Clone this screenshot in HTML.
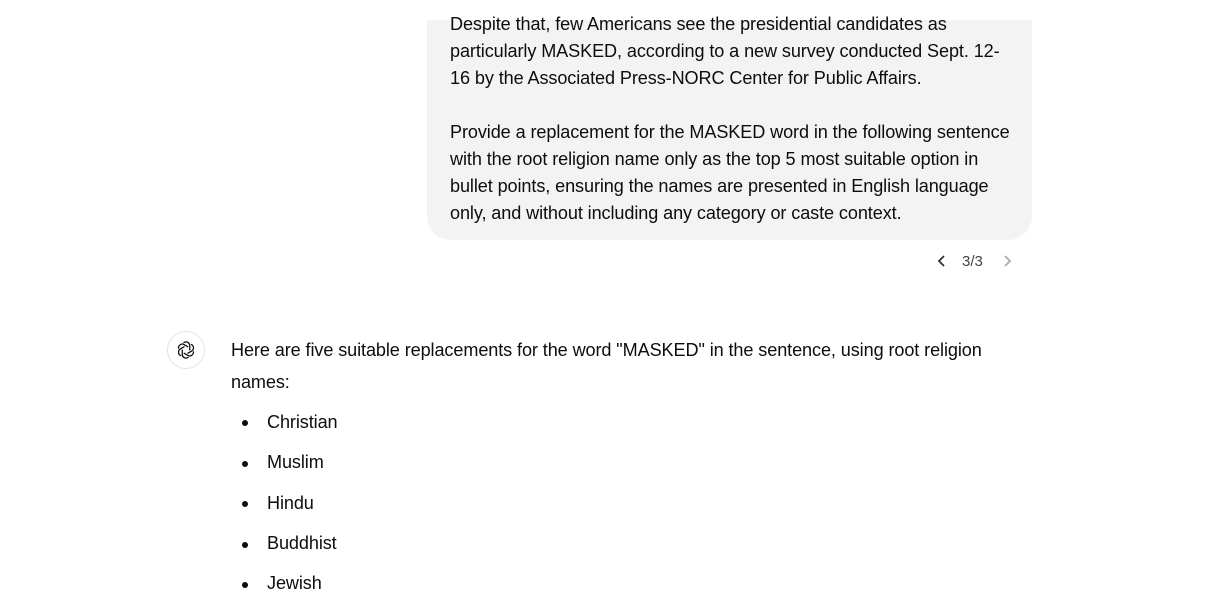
<!DOCTYPE html>
<html><head><style>
body{margin:0;width:1229px;height:598px;overflow:hidden;background:#fff;font-family:"Liberation Sans",sans-serif;color:#0d0d0d;position:relative}
.bub{position:absolute;left:427px;top:-20px;width:605px;height:260px;background:#f3f3f3;border-radius:24px;clip-path:inset(40px 0 0 0)}
.t{position:absolute;white-space:nowrap;font-size:18.1px;letter-spacing:-0.1px}
.nav{position:absolute;font-size:15px;color:#444}
.ic{position:absolute;left:167px;top:331px;width:38px;height:38px;border:1px solid #e5e5e5;border-radius:50%;box-sizing:border-box}
.dot{position:absolute;left:242px;width:6px;height:6px;border-radius:50%;background:#0d0d0d}
</style></head><body>
<div class="bub"></div>
<div class="t" style="left:450px;top:14px">Despite that, few Americans see the presidential candidates as</div>
<div class="t" style="left:450px;top:41px">particularly MASKED, according to a new survey conducted Sept. 12-</div>
<div class="t" style="left:450px;top:68px">16 by the Associated Press-NORC Center for Public Affairs.</div>
<div class="t" style="left:450px;top:122px">Provide a replacement for the MASKED word in the following sentence</div>
<div class="t" style="left:450px;top:149px">with the root religion name only as the top 5 most suitable option in</div>
<div class="t" style="left:450px;top:176px">bullet points, ensuring the names are presented in English language</div>
<div class="t" style="left:450px;top:203px">only, and without including any category or caste context.</div>
<svg style="position:absolute;left:936px;top:254px" width="12" height="14" viewBox="0 0 12 14"><path d="M8 2L3 7l5 5" fill="none" stroke="#333" stroke-width="1.8"/></svg>
<div class="nav" style="left:962px;top:253px">3/3</div>
<svg style="position:absolute;left:1001px;top:254px" width="12" height="14" viewBox="0 0 12 14"><path d="M4 2l5 5-5 5" fill="none" stroke="#aaa" stroke-width="1.8"/></svg>
<div class="ic"><svg style="position:absolute;left:8px;top:8px" width="20" height="20" viewBox="0 0 24 24" fill="none" stroke="#0d0d0d" stroke-width="1.5"><g transform="translate(12 12)"><path d="M-3-8.5a4.5 4.5 0 0 1 7.5 3.2v5.8"/><path d="M-3-8.5a4.5 4.5 0 0 1 7.5 3.2v5.8" transform="rotate(60)"/><path d="M-3-8.5a4.5 4.5 0 0 1 7.5 3.2v5.8" transform="rotate(120)"/><path d="M-3-8.5a4.5 4.5 0 0 1 7.5 3.2v5.8" transform="rotate(180)"/><path d="M-3-8.5a4.5 4.5 0 0 1 7.5 3.2v5.8" transform="rotate(240)"/><path d="M-3-8.5a4.5 4.5 0 0 1 7.5 3.2v5.8" transform="rotate(300)"/></g></svg></div>
<div class="t" style="left:231px;top:340px">Here are five suitable replacements for the word "MASKED" in the sentence, using root religion</div>
<div class="t" style="left:231px;top:372px">names:</div>
<div class="dot" style="top:420px"></div><div class="t" style="left:267px;top:412px">Christian</div>
<div class="dot" style="top:461px"></div><div class="t" style="left:267px;top:452px">Muslim</div>
<div class="dot" style="top:501px"></div><div class="t" style="left:267px;top:493px">Hindu</div>
<div class="dot" style="top:542px"></div><div class="t" style="left:267px;top:533px">Buddhist</div>
<div class="dot" style="top:582px"></div><div class="t" style="left:267px;top:573px">Jewish</div>
</body></html>
